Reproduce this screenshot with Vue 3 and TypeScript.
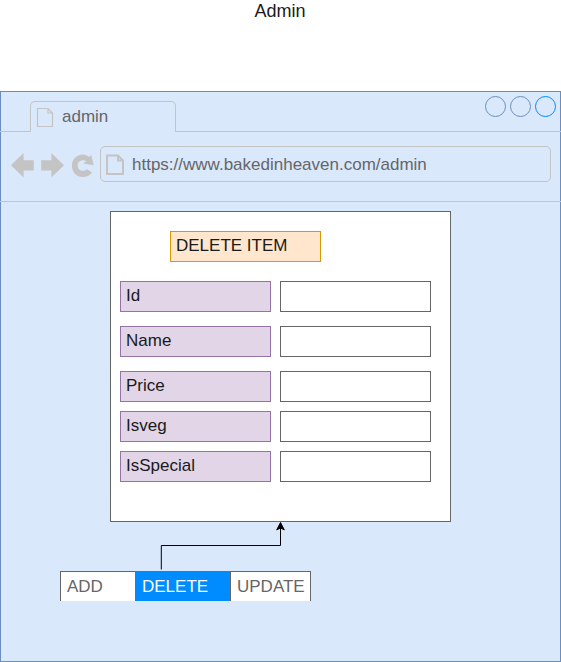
<script setup lang="ts">
interface Field {
  label: string
  space: 'wide' | 'tight'
}

const fields: Field[] = [
  { label: 'Id', space: 'wide' },
  { label: 'Name', space: 'wide' },
  { label: 'Price', space: 'tight' },
  { label: 'Isveg', space: 'tight' },
  { label: 'IsSpecial', space: 'tight' },
]
</script>

<template>
  <div class="page">
    <h1 class="title">Admin</h1>
    <section class="window">
      <header class="tabs">
        <div class="tab">
          <svg class="tab-doc" width="18" height="21" viewBox="0 0 18 21">
            <path d="M1.5 1.5H12L16.5 6V19.5H1.5ZM12 1.5V6H16.5" />
          </svg>
          <span>admin</span>
        </div>
        <svg class="controls" width="73" height="23" viewBox="0 0 73 23">
          <circle cx="11.5" cy="11.5" r="10" />
          <circle cx="36.5" cy="11.5" r="10" />
          <circle class="active" cx="61.5" cy="11.5" r="10" />
        </svg>
      </header>
      <nav class="toolbar">
        <svg class="nav-icons" width="85" height="26" viewBox="10 152 85 26">
          <path d="M11 165.3L23.6 153V160.2H33.7V170.5H23.6V177.5Z" />
          <path d="M64 165.3L51.4 153V160.2H41.2V170.5H51.4V177.5Z" />
          <path d="M91.2 155L93.7 165.2L83.2 163.6L86.4 161C82.2 158.8 77.5 161.2 77.6 165.7C77.8 170.4 83.2 172.6 86.9 169.2L92 172.5C89.5 176 86.4 177 82.7 177C76.3 177 71.9 171.8 71.9 165.7C71.9 159.5 76.6 154.5 82.9 154.5C85.4 154.5 87.4 155.6 89.3 157Z" />
        </svg>
        <div class="address">
          <svg class="address-doc" width="19" height="22" viewBox="0 0 19 22">
            <path d="M1 1.5H12L17 6.5V20H1ZM12 1.5V6.5H17" />
          </svg>
          <span>https://www.bakedinheaven.com/admin</span>
        </div>
      </nav>
      <main class="canvas">
        <div class="form">
          <div class="heading">DELETE ITEM</div>
          <div v-for="field in fields" :key="field.label" class="row" :class="field.space">
            <div class="label">{{ field.label }}</div>
            <div class="input"></div>
          </div>
        </div>
        <svg class="connector" width="140" height="49" viewBox="150 522 140 49">
          <path class="line" d="M161.3 569.5V545.5H280.5V527" />
          <path d="M280.5 522.5L284.3 529.9L280.5 528L276.7 529.9Z" />
        </svg>
        <div class="actions">
          <div class="action add">ADD</div>
          <div class="action delete">DELETE</div>
          <div class="action update">UPDATE</div>
        </div>
      </main>
    </section>
  </div>
</template>

<style>
body {
  margin: 0;
  background: #fff;
}
</style>

<style scoped>
.page {
  width: 561px;
  height: 662px;
  overflow: hidden;
  font-family: "Liberation Sans", Arial, sans-serif;
  font-size: 17px;
  line-height: 20px;
  color: #1a1a1a;
}
.page * {
  box-sizing: border-box;
}
svg {
  display: block;
  flex: none;
}
.title {
  height: 91px;
  margin: 0;
  padding-top: 1px;
  padding-right: 1px;
  font-size: 18px;
  font-weight: 400;
  text-align: center;
}
.window {
  height: 571px;
  border: 1px solid #6c8ebf;
  background: #dae8fc;
}
.tabs {
  display: flex;
  justify-content: space-between;
  height: 40px;
  margin: 0 -1px;
  padding: 3px 4px 0 30px;
  border-bottom: 1px solid #c4c4c4;
}
.tab {
  display: flex;
  width: 146px;
  height: 31px;
  margin-top: 6px;
  padding: 5px 0 0 5px;
  border: 1px solid #c4c4c4;
  border-bottom: 0;
  border-radius: 5px 5px 0 0;
  background: #dae8fc;
  color: #666;
}
.tab span {
  margin-left: 8px;
}
.tab-doc path {
  fill: none;
  stroke: #c4c4c4;
  stroke-width: 1.2;
}
.controls circle {
  fill: none;
  stroke: #6c8ebf;
}
.controls .active {
  stroke: #008cff;
}
.toolbar {
  display: flex;
  height: 70px;
  margin: 0 -1px;
  padding: 14px 10px 0;
  border-bottom: 1px solid #c4c4c4;
}
.nav-icons {
  margin-top: 6px;
  fill: #c4c4c4;
}
.address {
  display: flex;
  width: 451px;
  height: 36px;
  margin-left: 5px;
  padding: 7px 0 0 5px;
  border: 1px solid #c4c4c4;
  border-radius: 5px;
  color: #666;
}
.address span {
  margin-left: 7px;
  padding-top: 1px;
}
.address-doc path {
  fill: none;
  stroke: #c4c4c4;
  stroke-width: 2;
}
.canvas {
  padding-top: 9px;
}
.form {
  width: 341px;
  height: 311px;
  margin-left: 109px;
  padding: 19px 9px 0;
  border: 1px solid #666;
  background: #fff;
}
.heading {
  width: 151px;
  height: 31px;
  margin: 0 0 19px 50px;
  padding: 4px 5px;
  border: 1px solid #d79b00;
  background: #ffe6cc;
}
.row {
  display: flex;
  gap: 9px;
}
.row.wide {
  margin-bottom: 14px;
}
.row.tight {
  margin-bottom: 9px;
}
.label,
.input {
  width: 151px;
  height: 31px;
  border: 1px solid #666;
}
.label {
  padding: 4px 5px;
  border-color: #9673a6;
  background: #e1d5e7;
}
.connector {
  margin-left: 149px;
}
.connector path {
  fill: #000;
  stroke: #000;
}
.connector .line {
  fill: none;
}
.actions {
  display: flex;
  width: 251px;
  height: 30px;
  margin-left: 59px;
}
.action {
  padding: 5px 0 0 6px;
  border-top: 1px solid #666;
  background: #fff;
  color: #666;
}
.add {
  width: 75px;
  border-left: 1px solid #666;
}
.delete {
  width: 95px;
  padding-left: 7px;
  border-color: #008cff;
  background: #008cff;
  color: #fff;
}
.update {
  width: 81px;
  border-right: 1px solid #666;
  border-left: 1px solid #666;
}
</style>
